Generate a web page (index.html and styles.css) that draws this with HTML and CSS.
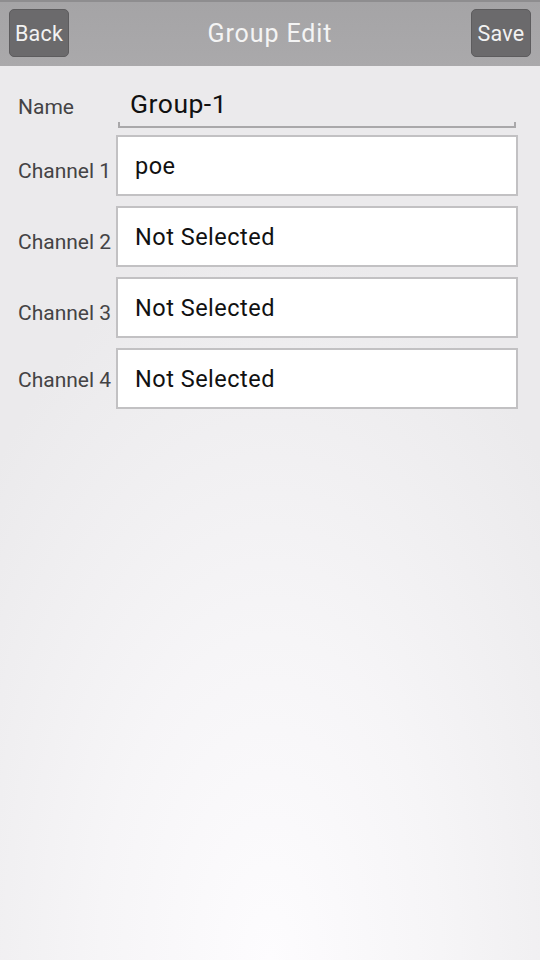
FILE: index.html
```html
<!DOCTYPE html>
<html lang="en">
<head>
<meta charset="utf-8">
<title>Group Edit</title>
<link rel="stylesheet" href="styles.css">
</head>
<body>
<div class="page">
  <header class="topbar">
    <button class="btn">Back</button>
    <h1 class="title">Group Edit</h1>
    <button class="btn">Save</button>
  </header>
  <main class="form">
    <div class="row row-name">
      <span class="label label-name">Name</span>
      <div class="name-field">Group-1</div>
    </div>
    <div class="row">
      <span class="label">Channel 1</span>
      <div class="box">poe</div>
    </div>
    <div class="row">
      <span class="label">Channel 2</span>
      <div class="box">Not Selected</div>
    </div>
    <div class="row">
      <span class="label">Channel 3</span>
      <div class="box">Not Selected</div>
    </div>
    <div class="row">
      <span class="label label-last">Channel 4</span>
      <div class="box">Not Selected</div>
    </div>
  </main>
</div>
</body>
</html>
```
FILE: styles.css
```css
html, body {
  margin: 0;
  padding: 0;
  height: 100%;
}
body {
  font-family: Roboto, "Noto Sans", "Liberation Sans", sans-serif;
  background: #e9e8ea;
}
.page {
  min-height: 960px;
  background: radial-gradient(ellipse 70% 75% at 50% 100%, #fdfcfe 0%, #f6f5f7 45%, #ebeaec 100%);
  background-color: #e9e8ea;
}
.topbar {
  height: 66px;
  box-sizing: border-box;
  border-top: 2px solid #8e8d8f;
  background: linear-gradient(#a5a4a6, #aaa9ab);
  display: flex;
  align-items: center;
  justify-content: space-between;
  padding: 0 9px;
}
.btn {
  width: 60px;
  height: 48px;
  margin-top: -2px;
  box-sizing: border-box;
  background: #6b6a6c;
  border: 1px solid #5d5c5e;
  border-radius: 5px;
  color: #f2f2f2;
  font-family: Roboto, "Noto Sans", "Liberation Sans", sans-serif;
  font-size: 21.5px;
  letter-spacing: 0.2px;
  padding: 0;
}
.title {
  margin: 0;
  margin-top: -2px;
  font-weight: normal;
  font-size: 25px;
  letter-spacing: 0.9px;
  color: #f4f4f4;
}
.form {
  padding: 14px 22px 0 18px;
  display: flex;
  flex-direction: column;
}
.row {
  display: flex;
  align-items: center;
  margin-bottom: 10px;
}
.row-name {
  margin-bottom: 7px;
}
.label {
  width: 98px;
  flex: none;
  font-size: 21px;
  color: #444345;
  padding-top: 11px;
  white-space: nowrap;
}
.label-name {
  padding-top: 6px;
}
.label-last {
  padding-top: 3px;
}
.name-field {
  position: relative;
  flex: 1;
  height: 48px;
  margin: 0 2px 0 2px;
  box-sizing: border-box;
  border-bottom: 2px solid #a9a8aa;
  padding-left: 12px;
  font-size: 26.5px;
  letter-spacing: 0.5px;
  line-height: 48px;
  color: #111;
}
.name-field::before,
.name-field::after {
  content: "";
  position: absolute;
  bottom: -2px;
  width: 2px;
  height: 6px;
  background: #a9a8aa;
}
.name-field::before { left: 0; }
.name-field::after { right: 0; }
.box {
  flex: 1;
  height: 61px;
  box-sizing: border-box;
  border: 2px solid #c2c1c3;
  background: #fff;
  padding-left: 17px;
  font-size: 23.5px;
  letter-spacing: 0.5px;
  line-height: 59px;
  color: #111;
}
```
